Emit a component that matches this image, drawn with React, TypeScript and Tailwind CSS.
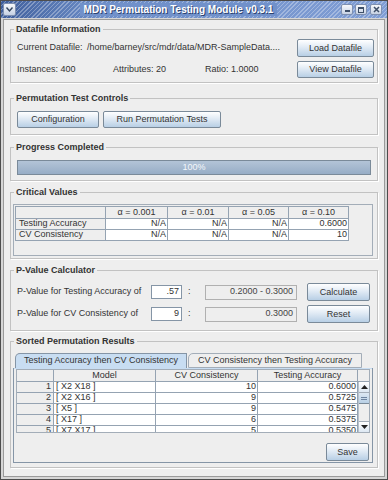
import React from 'react';

const BTN =
  'flex items-center justify-center border border-[#7a8a99] rounded-[2px] bg-linear-to-b from-[#ffffff] via-[#dde8f3] to-[#b8cfe5] text-[#333333] leading-none whitespace-nowrap';
const GRID = 'border-r border-b border-[#95a3b2]';

function Titled({ title, className = '', children }: { title: string; className?: string; children?: React.ReactNode }) {
  return (
    <div className={`relative mx-[6px] border border-[#c2c2c2] shadow-[1px_1px_0_#ffffff] ${className}`}>
      <span className="absolute left-[3px] -top-[7px] px-[2px] bg-[#eeeeee] font-bold leading-[12px] text-[#333333]">
        {title}
      </span>
      {children}
    </div>
  );
}

function TitleBar() {
  return (
    <div className="h-[17px] flex items-center px-[2px] bg-[image:repeating-linear-gradient(135deg,rgba(255,255,255,0.3)_0px,rgba(255,255,255,0.3)_1px,transparent_1px,transparent_3px),linear-gradient(90deg,#3f5f9c,#6b8cc6_25%,#809ed5)]">
      <div className="w-[13px] h-[13px] border border-[#7f90b0] rounded-[2px] bg-linear-to-b from-[#f6f8fb] to-[#c7d2e4] flex items-center justify-center">
        <svg width="9" height="7" viewBox="0 0 9 7">
          <path d="M1.5 1.5 L4.5 5 L7.5 1.5" stroke="#34465f" strokeWidth="1.4" fill="none" />
        </svg>
      </div>
      <div className="flex-1 flex justify-center">
        <span className="px-[4px] bg-[#7191ca] text-white font-bold text-[10px] leading-[13px] [text-shadow:1px_1px_0_#2c4270]">
          MDR Permutation Testing Module v0.3.1
        </span>
      </div>
      <div className="flex items-center gap-[2px] mr-[3px]">
        <div className="w-[12px] h-[11px] border border-[#7f90b0] rounded-[2px] bg-linear-to-b from-[#f6f8fb] to-[#c7d2e4] flex items-end justify-center pb-[2px]">
          <div className="w-[5px] h-[2px] bg-[#3e4f68]" />
        </div>
        <div className="w-[12px] h-[11px] border border-[#7f90b0] rounded-[2px] bg-linear-to-b from-[#f6f8fb] to-[#c7d2e4] flex items-center justify-center">
          <div className="w-[6px] h-[6px] border border-[#3e4f68] border-t-2" />
        </div>
        <div className="w-[12px] h-[11px] ml-[1px] border border-[#7f90b0] rounded-[2px] bg-linear-to-b from-[#f6f8fb] to-[#c7d2e4] flex items-center justify-center">
          <svg width="7" height="7" viewBox="0 0 7 7">
            <path d="M1 1 L6 6 M6 1 L1 6" stroke="#3e4f68" strokeWidth="1.5" />
          </svg>
        </div>
      </div>
    </div>
  );
}

const cvCols = ['α = 0.001', 'α = 0.01', 'α = 0.05', 'α = 0.10'];
const cvRows = [
  ['Testing Accuracy', 'N/A', 'N/A', 'N/A', '0.6000'],
  ['CV Consistency', 'N/A', 'N/A', 'N/A', '10'],
];

const results = [
  ['1', '[ X2 X18 ]', '10', '0.6000'],
  ['2', '[ X2 X16 ]', '9', '0.5725'],
  ['3', '[ X5 ]', '9', '0.5475'],
  ['4', '[ X17 ]', '6', '0.5375'],
  ['5', '[ X7 X17 ]', '5', '0.5350'],
];

function CriticalTable() {
  return (
    <div className="h-[52px] border border-[#a3adb8] p-[1px]">
      <div className="grid grid-cols-[90px_62px_61px_60px_60px] w-max border-l border-t border-[#95a3b2]">
        <div className={`h-[12px] bg-[#eeeeee] ${GRID}`} />
        {cvCols.map((c) => (
          <div key={c} className={`h-[12px] flex items-center justify-center bg-[#eeeeee] ${GRID}`}>
            {c}
          </div>
        ))}
        {cvRows.map((r) =>
          r.map((v, i) =>
            i === 0 ? (
              <div key={r[0] + i} className={`h-[11px] flex items-center pl-[3px] bg-[#eeeeee] ${GRID}`}>
                {v}
              </div>
            ) : (
              <div key={r[0] + i} className={`h-[11px] flex items-center justify-end pr-[1px] bg-white ${GRID}`}>
                {v}
              </div>
            )
          )
        )}
      </div>
    </div>
  );
}

function ResultsTable() {
  return (
    <div className="border border-[#a3adb8] bg-[#eeeeee]">
      <div className="grid grid-cols-[37px_102px_102px_100px_12px] border-b border-[#95a3b2]">
        <div className="h-[11px] bg-[#eeeeee] border-r border-[#95a3b2]" />
        <div className="h-[11px] flex items-center justify-center border-r border-[#95a3b2]">Model</div>
        <div className="h-[11px] flex items-center justify-center border-r border-[#95a3b2]">CV Consistency</div>
        <div className="h-[11px] flex items-center justify-center border-r border-[#95a3b2]">Testing Accuracy</div>
        <div className="h-[11px]" />
      </div>
      <div className="flex h-[50px] overflow-hidden">
        <div className="grid grid-cols-[37px_102px_102px_100px] content-start">
          {results.map((r) => (
            <React.Fragment key={r[0]}>
              <div className={`h-[11px] flex items-center justify-end pr-[2px] bg-[#eeeeee] ${GRID}`}>{r[0]}</div>
              <div className={`h-[11px] flex items-center pl-[2px] bg-white ${GRID}`}>{r[1]}</div>
              <div className={`h-[11px] flex items-center justify-end pr-[1px] bg-white ${GRID}`}>{r[2]}</div>
              <div className={`h-[11px] flex items-center justify-end pr-[1px] bg-white ${GRID}`}>{r[3]}</div>
            </React.Fragment>
          ))}
        </div>
        <div className="w-[12px] flex flex-col bg-[#eeeeee] border-l border-[#b8c2cc]">
          <div className="h-[11px] flex items-center justify-center bg-linear-to-b from-white to-[#dde8f3] border-b border-[#a3adb8]">
            <svg width="7" height="4" viewBox="0 0 7 4">
              <path d="M0 4 L3.5 0 L7 4 Z" fill="#222222" />
            </svg>
          </div>
          <div className="h-[11px] flex flex-col items-center justify-center gap-[1px] bg-linear-to-b from-[#dde8f3] to-[#b8cfe5] border-b border-[#7a8a99]">
            <div className="w-[6px] h-[1px] bg-[#6e84a0]" />
            <div className="w-[6px] h-[1px] bg-[#6e84a0]" />
          </div>
          <div className="flex-1" />
          <div className="h-[11px] flex items-center justify-center bg-linear-to-b from-white to-[#dde8f3] border-t border-[#a3adb8]">
            <svg width="7" height="4" viewBox="0 0 7 4">
              <path d="M0 0 L3.5 4 L7 0 Z" fill="#222222" />
            </svg>
          </div>
        </div>
      </div>
    </div>
  );
}

function PRow({ label, value, result, button, className = '' }: { label: string; value: string; result: string; button: string; className?: string }) {
  return (
    <div className={`h-[18px] flex items-center ${className}`}>
      <div className="w-[134px]">{label}</div>
      <div className="w-[31px] h-[14px] bg-white border border-[#8595a6] flex items-center justify-end pr-[2px]">{value}</div>
      <div className="w-[23px] pl-[6px]">:</div>
      <div className="w-[92px] h-[15px] bg-[#eeeeee] border border-[#b0b0b0] flex items-center justify-end pr-[3px] text-[#444444]">
        {result}
      </div>
      <div className={`ml-[10px] w-[63px] h-[18px] ${BTN}`}>{button}</div>
    </div>
  );
}

export default function App() {
  return (
    <div className="w-[388px] h-[480px] flex flex-col border border-[#4d4d4d] bg-[#d6d6d6] font-['Liberation_Sans','DejaVu_Sans',Arial,sans-serif] text-[9px] text-[#333333] overflow-hidden">
      <TitleBar />
      <div className="flex-1 mx-[2px] mb-[2px] mt-[1px] border border-[#9a9a9a] bg-[#eeeeee] flex flex-col">
        <Titled title="Datafile Information" className="mt-[9px] h-[54px] pt-[9px] pl-[6px] pr-[3px]">
          <div className="h-[18px] flex items-center">
            <div className="w-[70px]">Current Datafile:</div>
            <div className="flex-1 whitespace-nowrap">/home/barney/src/mdr/data/MDR-SampleData....</div>
            <div className={`w-[77px] h-[18px] ${BTN}`}>Load Datafile</div>
          </div>
          <div className="mt-[4px] h-[17px] flex items-center">
            <div className="w-[96px]">Instances: 400</div>
            <div className="w-[92px]">Attributes: 20</div>
            <div className="flex-1">Ratio: 1.0000</div>
            <div className={`w-[77px] h-[17px] ${BTN}`}>View Datafile</div>
          </div>
        </Titled>

        <Titled title="Permutation Test Controls" className="mt-[15px] h-[37px] pt-[12px] pl-[6px] flex items-start gap-[4px]">
          <div className={`w-[82px] h-[17px] ${BTN}`}>Configuration</div>
          <div className={`w-[118px] h-[17px] ${BTN}`}>Run Permutation Tests</div>
        </Titled>

        <Titled title="Progress Completed" className="mt-[12px] h-[34px] pt-[12px] px-[6px]">
          <div className="h-[15px] border border-[#7a8a99] bg-linear-to-b from-[#b3c4d7] to-[#97adc6] flex items-center justify-center text-[#f4f7fb]">
            100%
          </div>
        </Titled>

        <Titled title="Critical Values" className="mt-[11px] h-[67px] pt-[11px] pl-[2px] pr-[4px]">
          <CriticalTable />
        </Titled>

        <Titled title="P-Value Calculator" className="mt-[11px] h-[61px] pt-[12px] pl-[6px]">
          <PRow label="P-Value for Testing Accuracy of" value=".57" result="0.2000 - 0.3000" button="Calculate" />
          <PRow label="P-Value for CV Consistency of" value="9" result="0.3000" button="Reset" className="mt-[4px]" />
        </Titled>

        <Titled title="Sorted Permutation Results" className="mt-[10px] h-[127px] pt-[11px] pl-[2px] pr-[4px]">
          <div className="h-[15px] flex items-end pl-[2px]">
            <div className="w-[172px] h-[15px] flex items-center justify-center border border-b-0 border-[#8595a6] rounded-tl-[5px] bg-[#c8ddf2]">
              Testing Accuracy then CV Consistency
            </div>
            <div className="ml-[1px] w-[174px] h-[15px] flex items-center justify-center border border-[#a3adb8] rounded-tl-[5px] bg-[#eeeeee]">
              CV Consistency then Testing Accuracy
            </div>
          </div>
          <div className="h-[95px] border border-t-0 border-[#8595a6] flex flex-col">
            <div className="h-[1px] bg-[#c8ddf2]" />
            <div className="pl-[2px] pr-[2px]">
              <ResultsTable />
            </div>
            <div className="mt-[10px] flex justify-end pr-[3px]">
              <div className={`w-[43px] h-[18px] ${BTN}`}>Save</div>
            </div>
          </div>
        </Titled>
      </div>
    </div>
  );
}
